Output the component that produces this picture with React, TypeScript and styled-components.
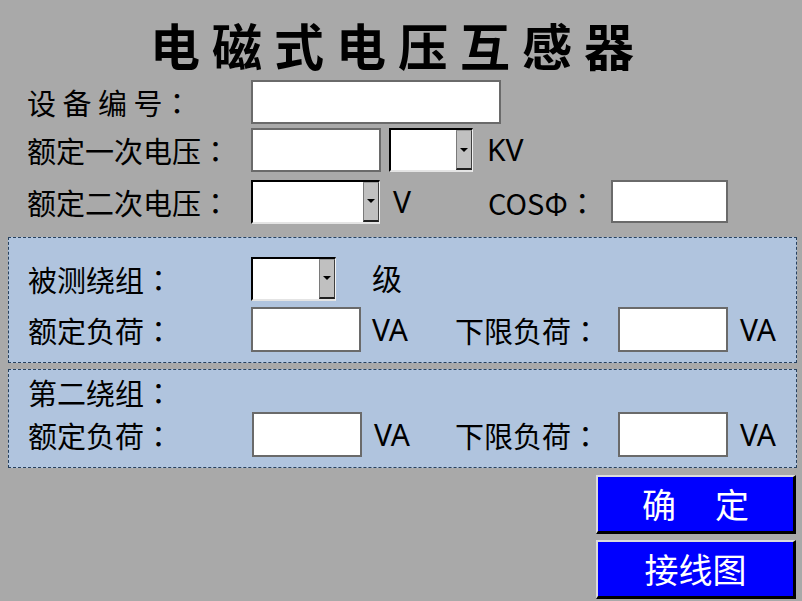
import React from 'react';
import styled, { createGlobalStyle } from 'styled-components';

const GlobalStyle = createGlobalStyle`
  html, body {
    margin: 0;
    padding: 0;
    background: #a9a9a9;
  }
  * {
    box-sizing: border-box;
  }
`;

const Page = styled.div`
  width: 802px;
  height: 601px;
  background: #a9a9a9;
  font-family: 'Noto Sans', 'Noto Sans CJK SC', sans-serif;
  color: #000;
  overflow: hidden;
`;

const Title = styled.h1`
  margin: 0;
  height: 80px;
  padding: 19px 6px 0 0;
  font-size: 50px;
  line-height: 50px;
  font-weight: 700;
  letter-spacing: 12px;
  text-align: center;
  font-family: 'Noto Sans CJK SC', sans-serif;
`;

const Row = styled.div<{ $h: number; $top?: number; $pad?: number }>`
  display: flex;
  align-items: center;
  height: ${(p) => p.$h}px;
  margin-top: ${(p) => p.$top ?? 0}px;
  padding-left: ${(p) => p.$pad ?? 27}px;
`;

const Label = styled.span<{ $w: number }>`
  width: ${(p) => p.$w}px;
  flex: none;
  font-family: 'Noto Sans CJK SC', sans-serif;
  font-size: 29px;
  line-height: 32px;
  white-space: pre;
`;

// centred full-width colon, as in the original form
const Colon = styled.span`
  font-family: 'Noto Sans CJK TC', 'Noto Sans CJK SC', sans-serif;
`;

const Unit = styled.span<{ $w?: number; $ml: number }>`
  width: ${(p) => (p.$w ? `${p.$w}px` : 'auto')};
  flex: none;
  margin-left: ${(p) => p.$ml}px;
  font-size: 30px;
  line-height: 32px;
`;

const TextBox = styled.div<{ $w: number; $h?: number }>`
  width: ${(p) => p.$w}px;
  height: ${(p) => p.$h ?? 44}px;
  flex: none;
  background: #fff;
  border: 2px solid #6a6a6a;
`;

const Combo = styled.div<{ $w: number; $h?: number }>`
  width: ${(p) => p.$w}px;
  height: ${(p) => p.$h ?? 44}px;
  flex: none;
  display: flex;
  justify-content: flex-end;
  background: #fff;
  border-style: solid;
  border-width: 2px 1px 2px 2px;
  border-color: #000 #f2f2f2 #e4e4e4 #000;
`;

const DropButton = styled.div`
  width: 16px;
  height: 100%;
  background: #c0c0c0;
  border: 1px solid #7a7a7a;
  border-top-color: #9a9a9a;
  border-bottom: 2px solid #202020;
  border-right: 1px solid #404040;
  display: flex;
  align-items: center;
  justify-content: center;
  &::after {
    content: '';
    width: 0;
    height: 0;
    border-left: 4px solid transparent;
    border-right: 4px solid transparent;
    border-top: 4px solid #000;
  }
`;

const Panel = styled.section<{ $h: number; $top: number }>`
  margin: ${(p) => p.$top}px 5px 0 8px;
  height: ${(p) => p.$h}px;
  background: #b0c4de;
  border: 1px dashed #27415e;
  padding-left: 19px;
`;

const Actions = styled.div`
  display: flex;
  flex-direction: column;
  align-items: flex-end;
  gap: 6px;
  margin-top: 7px;
  padding-right: 6px;
`;

const ActionButton = styled.button`
  width: 200px;
  height: 59px;
  padding: 0;
  background: #0000ff;
  color: #fff;
  font-family: 'Noto Sans CJK SC', sans-serif;
  font-size: 34px;
  line-height: 40px;
  border-style: solid;
  border-width: 2px 3px 3px 2px;
  border-color: #dcdcdc #000 #000 #dcdcdc;
  display: flex;
  align-items: center;
  justify-content: center;
  cursor: pointer;
`;

const Gap = styled.span<{ $w: number }>`
  display: inline-block;
  width: ${(p) => p.$w}px;
`;

function ComboBox({ w, h }: { w: number; h?: number }) {
  return (
    <Combo $w={w} $h={h}>
      <DropButton />
    </Combo>
  );
}

function FieldLabel({ w, text }: { w: number; text: string }) {
  return (
    <Label $w={w}>
      {text}
      <Colon>：</Colon>
    </Label>
  );
}

export default function App() {
  return (
    <Page>
      <GlobalStyle />
      <Title>电磁式电压互感器</Title>

      <Row $h={44}>
        <FieldLabel w={224} text="设 备 编 号" />
        <TextBox $w={250} />
      </Row>
      <Row $h={44} $top={4}>
        <FieldLabel w={224} text="额定一次电压" />
        <TextBox $w={130} />
        <Gap $w={8} />
        <ComboBox w={84} />
        <Unit $ml={14}>KV</Unit>
      </Row>
      <Row $h={43} $top={8}>
        <FieldLabel w={224} text="额定二次电压" />
        <ComboBox w={129} />
        <Unit $ml={13} $w={95}>V</Unit>
        <FieldLabel w={123} text="COSΦ" />
        <TextBox $w={117} $h={43} />
      </Row>

      <Panel $h={126} $top={14}>
        <Row $h={43} $top={19} $pad={0}>
          <FieldLabel w={223} text="被测绕组" />
          <ComboBox w={85} />
          <Unit $ml={36}>级</Unit>
        </Row>
        <Row $h={45} $top={7} $pad={0}>
          <FieldLabel w={223} text="额定负荷" />
          <TextBox $w={110} $h={45} />
          <Unit $ml={11} $w={83}>VA</Unit>
          <FieldLabel w={163} text="下限负荷" />
          <TextBox $w={110} $h={45} />
          <Unit $ml={12}>VA</Unit>
        </Row>
      </Panel>

      <Panel $h={99} $top={6}>
        <Row $h={30} $top={7} $pad={0}>
          <FieldLabel w={223} text="第二绕组" />
        </Row>
        <Row $h={45} $top={5} $pad={0}>
          <FieldLabel w={224} text="额定负荷" />
          <TextBox $w={110} $h={45} />
          <Unit $ml={12} $w={81}>VA</Unit>
          <FieldLabel w={163} text="下限负荷" />
          <TextBox $w={110} $h={45} />
          <Unit $ml={12}>VA</Unit>
        </Row>
      </Panel>

      <Actions>
        <ActionButton>
          确<Gap $w={39} />定
        </ActionButton>
        <ActionButton>接线图</ActionButton>
      </Actions>
    </Page>
  );
}
